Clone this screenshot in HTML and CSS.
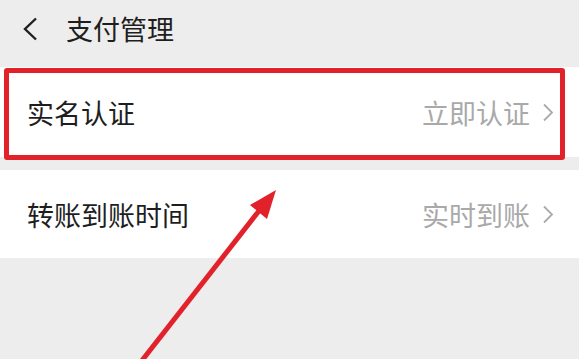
FILE: index.html
```html
<!DOCTYPE html>
<html lang="zh-CN">
<head>
<meta charset="utf-8">
<title>支付管理</title>
<link rel="stylesheet" href="styles.css">
</head>
<body>
<div class="page">
  <header class="header">
    <svg class="back" width="16" height="24" viewBox="0 0 16 24"><polyline points="14,1.5 3,12 14,22.5" fill="none" stroke="#1f1f1f" stroke-width="2.4"/></svg>
    <h1 class="title">支付管理</h1>
  </header>
  <div class="list">
    <div class="row row-first">
      <span class="label">实名认证</span>
      <span class="value">立即认证<svg class="chev" width="12" height="19" viewBox="0 0 12 19"><polyline points="2,1.5 10,9.5 2,17.5" fill="none" stroke="#ababab" stroke-width="1.8"/></svg></span>
    </div>
    <div class="row row-second">
      <span class="label">转账到账时间</span>
      <span class="value">实时到账<svg class="chev" width="12" height="19" viewBox="0 0 12 19"><polyline points="2,1.5 10,9.5 2,17.5" fill="none" stroke="#ababab" stroke-width="1.8"/></svg></span>
    </div>
  </div>
  <div class="highlight"></div>
  <svg class="arrow" width="579" height="359" viewBox="0 0 579 359">
    <line x1="133" y1="372" x2="262" y2="207" stroke="#e2222b" stroke-width="5"/>
    <polygon points="276,190 250,205 267,219" fill="#e2222b"/>
  </svg>
</div>
</body>
</html>
```

FILE: styles.css
```css
html, body {
  margin: 0;
  padding: 0;
  background: #ededed;
}
.page {
  position: relative;
  width: 579px;
  height: 359px;
  overflow: hidden;
  font-family: "Noto Sans CJK SC", "Noto Sans", sans-serif;
}
.header {
  height: 56px;
  display: flex;
  align-items: center;
  padding-left: 22px;
}
.back {
  display: block;
  margin-top: 1px;
}
.title {
  margin: 0 0 0 28px;
  font-size: 27px;
  font-weight: normal;
  color: #1e1e1e;
  line-height: 1;
}
.list {
  margin-top: 11px;
  display: flex;
  flex-direction: column;
  gap: 13px;
}
.row {
  background: #ffffff;
  display: flex;
  align-items: center;
  justify-content: space-between;
  padding: 0 25px 0 27px;
}
.row-first {
  height: 90px;
}
.row-second {
  height: 88px;
}
.label {
  font-size: 27px;
  color: #1e1e1e;
  line-height: 1;
}
.value {
  display: flex;
  align-items: center;
  font-size: 27px;
  color: #a9a9a9;
  line-height: 1;
}
.chev {
  display: block;
  margin-left: 12px;
}
.highlight {
  position: absolute;
  left: 4px;
  top: 68px;
  width: 561px;
  height: 92px;
  box-sizing: border-box;
  border: 5px solid #e1222a;
  border-radius: 3px;
}
.arrow {
  position: absolute;
  left: 0;
  top: 0;
  pointer-events: none;
}
```
